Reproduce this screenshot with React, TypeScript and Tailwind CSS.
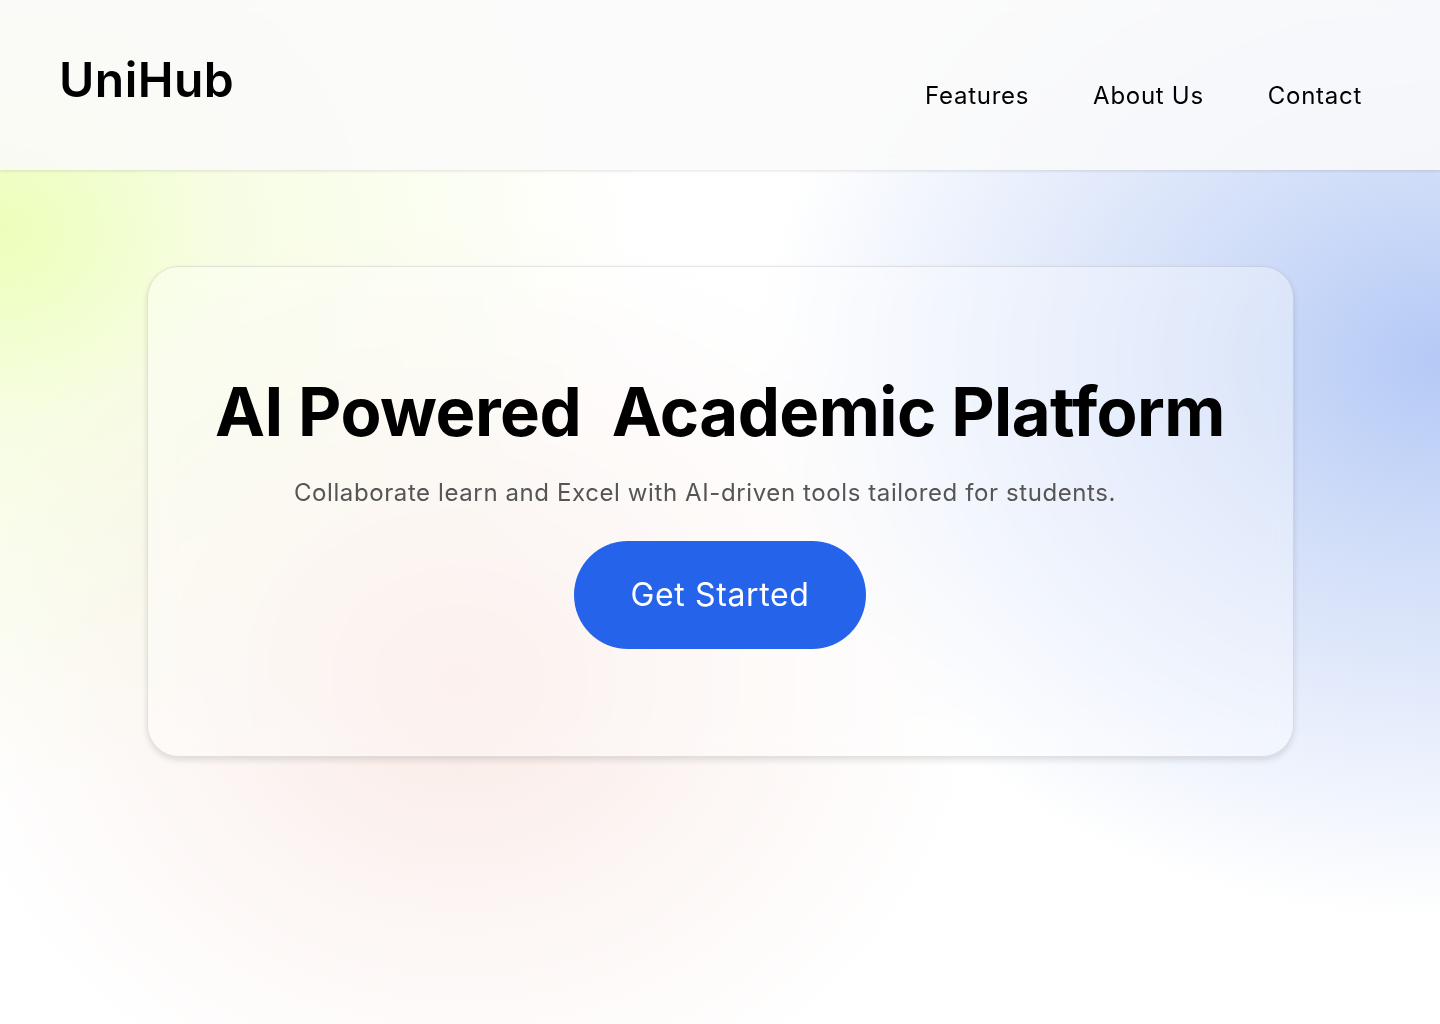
import React from "react";

function App() {
    return (
        <div
            className="relative min-h-screen w-full overflow-hidden bg-white font-['Inter',sans-serif] text-black"
        >
            {/* soft colour blobs behind everything */}
            <div className="pointer-events-none absolute inset-0 bg-[radial-gradient(ellipse_640px_560px_at_0px_230px,rgba(236,255,185,1),rgba(240,252,205,0.55)_35%,rgba(245,250,230,0)_100%)]" />
            <div className="pointer-events-none absolute inset-0 bg-[radial-gradient(ellipse_680px_560px_at_1440px_360px,rgba(180,201,246,1),rgba(190,208,246,0.7)_35%,rgba(210,222,250,0)_100%)]" />
            <div className="pointer-events-none absolute inset-0 bg-[radial-gradient(ellipse_520px_460px_at_460px_680px,rgba(248,228,222,0.8),rgba(248,232,226,0.4)_50%,rgba(250,238,234,0)_100%)]" />

            <div className="relative">
                {/* Header */}
                <header className="flex h-[170px] items-start justify-between bg-[#fafafa]/85 pl-[59px] pr-[78px] shadow-[0_1px_3px_rgba(0,0,0,0.12)] backdrop-blur-sm">
                    <h1 className="mt-[50px] text-[48px] font-semibold leading-[60px] tracking-[0.01em]">
                        UniHub
                    </h1>
                    <nav className="mt-[80px] flex items-center gap-[64px] text-[24px] leading-[32px] tracking-[0.03em]">
                        <a href="#">Features</a>
                        <a href="#">About Us</a>
                        <a href="#">Contact</a>
                    </nav>
                </header>

                {/* Hero card */}
                <section className="mx-auto mt-[96px] flex h-[491px] w-[1147px] flex-col items-center rounded-[32px] border border-black/10 bg-white/35 pt-[104px] shadow-[0_3px_6px_rgba(0,0,0,0.12)] backdrop-blur-md">
                    <h2 className="whitespace-pre text-[67px] font-bold leading-[82px] tracking-[-0.008em]">
                        {"AI Powered  Academic Platform"}
                    </h2>
                    <p className="mr-[30px] mt-[24px] text-[24px] leading-[32px] tracking-[0.025em] text-[#555]">
                        Collaborate learn and Excel with AI-driven tools tailored for students.
                    </p>
                    <button className="mt-[32px] rounded-full bg-[#2563eb] px-[56px] py-[34px] text-[32px] leading-[40px] tracking-[0.02em] text-white">
                        Get Started
                    </button>
                </section>
            </div>
        </div>
    );
}

export default App;
